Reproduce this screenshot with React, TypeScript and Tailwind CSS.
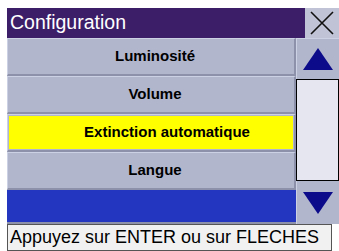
import * as React from 'react';

const items = ['Luminosité', 'Volume', 'Extinction automatique', 'Langue'];
const selected = 2;

function Row({ label, active }: { label: string; active: boolean }) {
  return (
    <div className="h-[38px] flex bg-[#b2b6cd] border-t border-l border-[#cdd1e4] border-b-2 border-r-2 border-b-[#8d91aa] border-r-[#8d91aa] p-[1px]">
      <div
        className={
          'flex-1 flex items-center justify-center text-[15px] font-bold text-black ' +
          (active ? 'bg-[#ffff00] pl-[32px]' : 'pl-[8px]')
        }
      >
        {label}
      </div>
    </div>
  );
}

export default function App() {
  return (
    <div className="w-[339px] h-[251px] bg-white pt-[8px] pl-[7px] overflow-hidden font-['Liberation_Sans',Arial,sans-serif]">
      {/* Title bar */}
      <div className="flex h-[30px]">
        <div className="flex-1 bg-[#3c1d68] text-white text-[19.5px] flex items-center pl-[3px]">Configuration</div>
        <div className="w-[34px] bg-[#c0c3d6] flex items-center justify-center">
          <svg width="26" height="26" viewBox="0 0 26 26">
            <path d="M2 2 L24 24 M24 2 L2 24" stroke="#111" strokeWidth="1.6" />
          </svg>
        </div>
      </div>

      {/* Body */}
      <div className="flex h-[186px]">
        <div className="flex-1 flex flex-col">
          {items.map((it, i) => (
            <Row key={it} label={it} active={i === selected} />
          ))}
          <div className="flex-1 bg-[#2236bf] border-b-2 border-[#8d91aa]" />
        </div>
        <div className="w-[43px] flex flex-col">
          <div className="h-[41px] bg-[#b2b6cd] border-t border-l border-[#cdd1e4] flex items-center justify-center">
            <svg width="32" height="24" viewBox="0 0 32 24">
              <polygon points="16,1 31,23 1,23" fill="#0c0c8a" />
            </svg>
          </div>
          <div className="h-[102px] bg-[#e6e6f0] border-[1.5px] border-black" />
          <div className="flex-1 bg-[#b2b6cd] border-l border-[#cdd1e4] flex items-center justify-center">
            <svg width="32" height="24" viewBox="0 0 32 24">
              <polygon points="1,1 31,1 16,23" fill="#0c0c8a" />
            </svg>
          </div>
        </div>
      </div>

      {/* Footer */}
      <div className="w-[325px] h-[27px] bg-[#f1f1f1] border border-[#555] flex items-center pl-[2px] text-[18px] text-black whitespace-nowrap">
        Appuyez sur ENTER ou sur FLECHES
      </div>
    </div>
  );
}
